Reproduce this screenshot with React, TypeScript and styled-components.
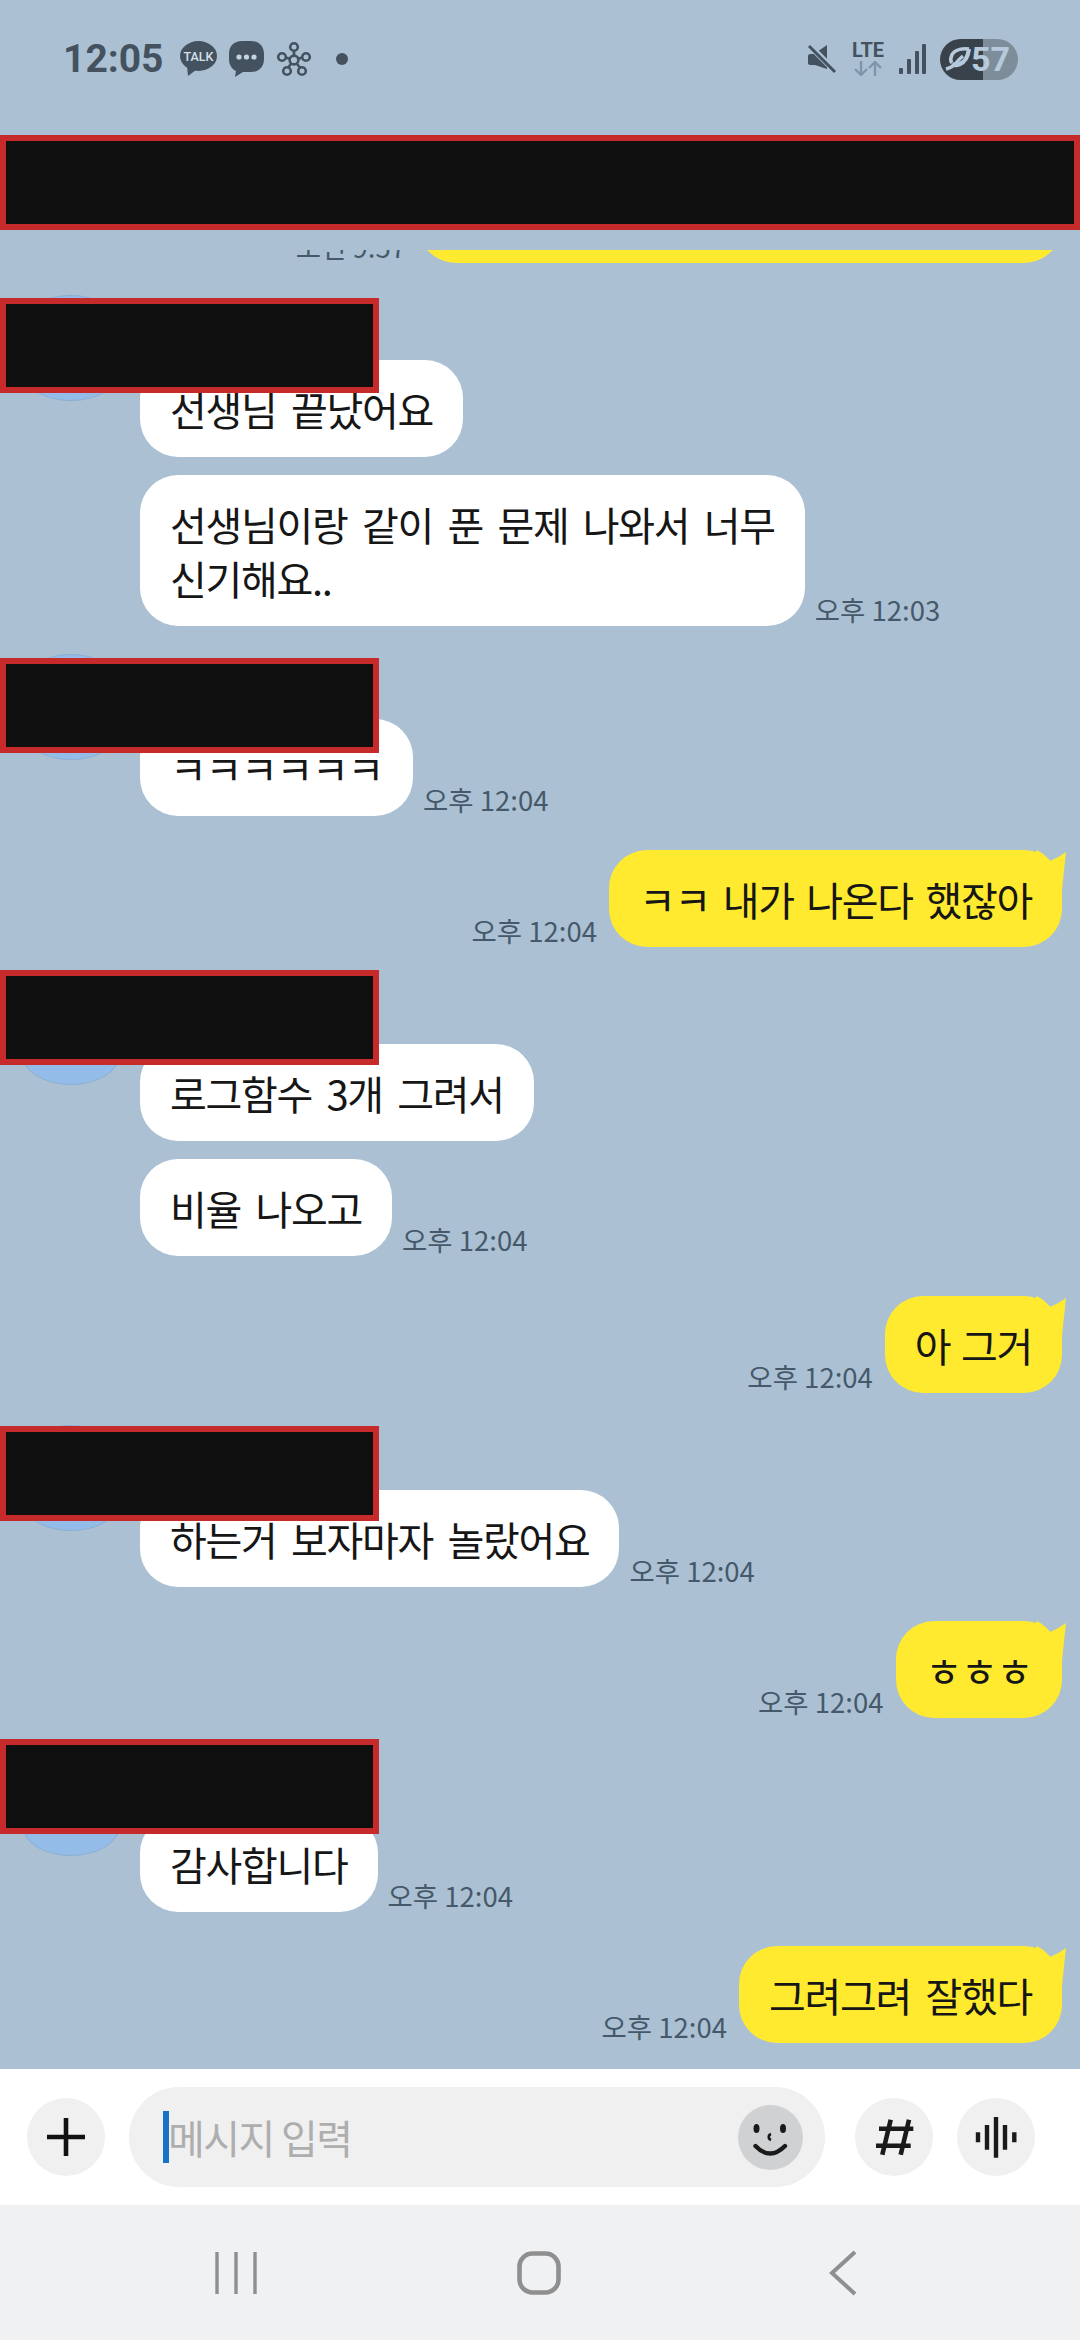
import React from 'react';
import styled, { createGlobalStyle } from 'styled-components';

const GlobalStyle = createGlobalStyle`
    html, body {
        margin: 0;
        padding: 0;
        background: #abc1d3;
    }
`;

const INK = '#44525f';

const TalkIcon = () => (
    <svg width="37" height="36" viewBox="0 0 37 36">
        <ellipse cx="18.5" cy="15" rx="18.5" ry="15" fill={INK} />
        <path d="M7 25 L8 35 L16 29 Z" fill={INK} />
        <text x="18.5" y="20" textAnchor="middle" fontFamily="Roboto, sans-serif" fontSize="12.5" fontWeight="500" fill="#d5e0ea">
            TALK
        </text>
    </svg>
);

const ChatDotsIcon = () => (
    <svg width="35" height="36" viewBox="0 0 35 36">
        <path d="M13 0 H22 C30 0 35 5 35 13 V18 C35 26 30 31 22 31 H14 L6 36 L7 30 C3 28 0 24 0 18 V13 C0 5 5 0 13 0 Z" fill={INK} />
        <circle cx="10" cy="16" r="2.6" fill="#c5d4e1" />
        <circle cx="17.5" cy="16" r="2.6" fill="#c5d4e1" />
        <circle cx="25" cy="16" r="2.6" fill="#c5d4e1" />
    </svg>
);

const HubIcon = () => (
    <svg width="36" height="36" viewBox="0 0 36 36" fill="none" stroke={INK} strokeWidth="2.6">
        <path d="M18 19 L18 10 M18 19 L8 16 M18 19 L28 16 M18 19 L11 28 M18 19 L25 28" />
        <circle cx="18" cy="19" r="4.4" fill="#abc1d3" />
        <circle cx="18" cy="6" r="3.8" fill="#abc1d3" />
        <circle cx="6" cy="16" r="3.8" fill="#abc1d3" />
        <circle cx="30" cy="16" r="3.8" fill="#abc1d3" />
        <circle cx="11" cy="30" r="3.8" fill="#abc1d3" />
        <circle cx="26" cy="30" r="3.8" fill="#abc1d3" />
    </svg>
);

const MuteIcon = () => (
    <svg width="30" height="30" viewBox="0 0 30 30">
        <path d="M1 12 C1 11 2 10 3 10 H7 L20 1 V25 L8 21 H3 C2 21 1 20 1 19 Z" fill={INK} />
        <path d="M1 0 L29 28" stroke="#abc1d3" strokeWidth="6" />
        <path d="M2 2 L28 28" stroke={INK} strokeWidth="3" />
    </svg>
);

const ArrowsIcon = () => (
    <svg width="34" height="15" viewBox="0 0 34 15" fill="none" stroke="#7e96aa" strokeWidth="2.4">
        <path d="M10 0 V13 M4 8 L10 14 L16 8" />
        <path d="M24 15 V2 M18 7 L24 1 L30 7" />
    </svg>
);

const SignalIcon = () => (
    <svg width="27" height="30" viewBox="0 0 27 30" fill={INK}>
        <rect x="0" y="24" width="4" height="6" rx="1" />
        <rect x="8" y="15" width="4" height="15" rx="1" />
        <rect x="16" y="7" width="4" height="23" rx="1" />
        <rect x="23" y="0" width="4" height="30" rx="1" />
    </svg>
);

const LeafIcon = () => (
    <svg width="26" height="24" viewBox="0 0 26 24" fill="none" stroke="#b7cadb">
        <path d="M24 2 C14 1 7 4 6 11 C5.5 13 6 15 7 16" strokeWidth="3.6" />
        <path d="M24 2 C23 9 20 15 15 17 C12 18.5 9 18.5 7 17" strokeWidth="4.2" />
        <path d="M1 22 C5 21 9 19 12 15 C13.5 13 15.5 11 18 9" strokeWidth="3.4" />
    </svg>
);

const PlusIcon = () => (
    <svg width="78" height="78" viewBox="0 0 78 78" stroke="#111" strokeWidth="4.6">
        <path d="M39 20 V58 M20 39 H58" />
    </svg>
);

const SmileIcon = () => (
    <svg width="65" height="65" viewBox="0 0 65 65" fill="#1a1a1a">
        <ellipse cx="18.5" cy="23.5" rx="3" ry="4.5" />
        <ellipse cx="45" cy="23.5" rx="3" ry="4.5" />
        <path d="M33 29 C30 30 30 34 33 35" fill="none" stroke="#1a1a1a" strokeWidth="2.6" />
        <path d="M17.5 41 Q32 56 47 41" fill="none" stroke="#1a1a1a" strokeWidth="4.4" strokeLinecap="round" />
    </svg>
);

const HashIcon = () => (
    <svg width="78" height="78" viewBox="0 0 78 78" stroke="#1a1a1a" strokeWidth="4.6">
        <path d="M35.7 21.7 L27.3 56.7 M54 21.7 L45.7 56.7 M24 30.7 H58.3 M21 47.7 H55.7" />
    </svg>
);

const VoiceIcon = () => (
    <svg width="78" height="78" viewBox="0 0 78 78" stroke="#1a1a1a" strokeWidth="4.4">
        <path d="M21 34.3 V44.3 M30 27 V51.7 M39 19 V59.7 M48 27 V51.7 M57.3 34.3 V44.3" />
    </svg>
);

const RecentsIcon = () => (
    <svg width="42" height="44" viewBox="0 0 42 44" stroke="#8f8f8f" strokeWidth="3.4">
        <path d="M2 1 V43 M21 1 V43 M40 1 V43" />
    </svg>
);

const HomeIcon = () => (
    <svg width="44" height="44" viewBox="0 0 44 44" fill="none" stroke="#8f8f8f" strokeWidth="4.6">
        <rect x="2.5" y="2.5" width="39" height="39" rx="13" />
    </svg>
);

const BackIcon = () => (
    <BackShape width="28" height="46" viewBox="0 0 28 46" fill="none" stroke="#8f8f8f" strokeWidth="4">
        <path d="M26 2 L3 23 L26 44" />
    </BackShape>
);

const BubbleTail = () => (
    <TailShape width="30" height="40" viewBox="0 0 30 40">
        <path d="M0 0 Q8 3 14 11 Q22 8 30 2 Q28 20 26 40 L0 40 Z" fill="#ffea30" />
    </TailShape>
);

export default function App() {
    return (
        <Screen>
            <GlobalStyle />
            <StatusBar>
                <StatusLeft>
                    <Clock>12:05</Clock>
                    <TalkIcon />
                    <ChatDotsIcon />
                    <HubIcon />
                    <NoticeDot />
                </StatusLeft>
                <StatusRight>
                    <MuteIcon />
                    <LteStack>
                        <LteLabel>LTE</LteLabel>
                        <ArrowsIcon />
                    </LteStack>
                    <SignalIcon />
                    <Battery>
                        <LeafIcon />
                        <BatteryLevel>57</BatteryLevel>
                    </Battery>
                </StatusRight>
            </StatusBar>

            <ChatHeader>
                <HeaderRedaction />
            </ChatHeader>

            <Messages>
                <SentRow $gap={0}>
                    <TimeStamp>오전 9:57</TimeStamp>
                    <Bubble $mine $minWidth={644}>
                        <BubbleTail />
                        &nbsp;
                    </Bubble>
                </SentRow>

                <ReceivedGroup $gap={32}>
                    <Avatar />
                    <Redaction $top={3} />
                    <Stack>
                        <ReceivedRow>
                            <Bubble>선생님 끝났어요</Bubble>
                        </ReceivedRow>
                        <ReceivedRow>
                            <Bubble>
                                선생님이랑 같이 푼 문제 나와서 너무
                                <br />
                                신기해요..
                            </Bubble>
                            <TimeStamp>오후 12:03</TimeStamp>
                        </ReceivedRow>
                    </Stack>
                </ReceivedGroup>

                <ReceivedGroup $gap={28}>
                    <Avatar />
                    <Redaction $top={4} />
                    <Stack>
                        <ReceivedRow>
                            <Bubble>ㅋㅋㅋㅋㅋㅋ</Bubble>
                            <TimeStamp>오후 12:04</TimeStamp>
                        </ReceivedRow>
                    </Stack>
                </ReceivedGroup>

                <SentRow $gap={34}>
                    <TimeStamp>오후 12:04</TimeStamp>
                    <Bubble $mine $wordSpacing={5}>
                        <BubbleTail />
                        ㅋㅋ 내가 나온다 했잖아
                    </Bubble>
                </SentRow>

                <ReceivedGroup $gap={32}>
                    <Avatar />
                    <Redaction $top={-9} />
                    <Stack>
                        <ReceivedRow>
                            <Bubble>로그함수 3개 그려서</Bubble>
                        </ReceivedRow>
                        <ReceivedRow>
                            <Bubble>비율 나오고</Bubble>
                            <TimeStamp>오후 12:04</TimeStamp>
                        </ReceivedRow>
                    </Stack>
                </ReceivedGroup>

                <SentRow $gap={40}>
                    <TimeStamp>오후 12:04</TimeStamp>
                    <Bubble $mine $wordSpacing={3}>
                        <BubbleTail />
                        아 그거
                    </Bubble>
                </SentRow>

                <ReceivedGroup $gap={32}>
                    <Avatar />
                    <Redaction $top={1} />
                    <Stack>
                        <ReceivedRow>
                            <Bubble>하는거 보자마자 놀랐어요</Bubble>
                            <TimeStamp>오후 12:04</TimeStamp>
                        </ReceivedRow>
                    </Stack>
                </ReceivedGroup>

                <SentRow $gap={34}>
                    <TimeStamp>오후 12:04</TimeStamp>
                    <Bubble $mine>
                        <BubbleTail />
                        ㅎㅎㅎ
                    </Bubble>
                </SentRow>

                <ReceivedGroup $gap={32}>
                    <Avatar />
                    <Redaction $top={-11} />
                    <Stack>
                        <ReceivedRow>
                            <Bubble>감사합니다</Bubble>
                            <TimeStamp>오후 12:04</TimeStamp>
                        </ReceivedRow>
                    </Stack>
                </ReceivedGroup>

                <SentRow $gap={34}>
                    <TimeStamp>오후 12:04</TimeStamp>
                    <Bubble $mine>
                        <BubbleTail />
                        그려그려 잘했다
                    </Bubble>
                </SentRow>
            </Messages>

            <Composer>
                <RoundButton>
                    <PlusIcon />
                </RoundButton>
                <InputPill>
                    <Caret />
                    <Placeholder>메시지 입력</Placeholder>
                    <EmojiButton>
                        <SmileIcon />
                    </EmojiButton>
                </InputPill>
                <RoundButton>
                    <HashIcon />
                </RoundButton>
                <RoundButton>
                    <VoiceIcon />
                </RoundButton>
            </Composer>

            <NavBar>
                <RecentsIcon />
                <HomeIcon />
                <BackIcon />
            </NavBar>
        </Screen>
    );
}

const Screen = styled.div`
    width: 1080px;
    height: 2340px;
    display: flex;
    flex-direction: column;
    overflow: hidden;
    background: #abc1d3;
    font-family: 'Noto Sans CJK KR', 'Noto Sans', sans-serif;
`;

const StatusBar = styled.div`
    height: 118px;
    flex: none;
    display: flex;
    align-items: center;
    justify-content: space-between;
    padding: 0 62px 0 63px;
`;

const StatusLeft = styled.div`
    display: flex;
    align-items: center;
    gap: 12px;
`;

const StatusRight = styled.div`
    display: flex;
    align-items: center;
    gap: 14px;
`;

const Clock = styled.div`
    font-family: Roboto, sans-serif;
    font-size: 39px;
    font-weight: 700;
    color: ${INK};
    margin-right: 4px;
`;

const NoticeDot = styled.div`
    width: 12px;
    height: 12px;
    margin-left: 12px;
    border-radius: 50%;
    background: ${INK};
`;

const LteStack = styled.div`
    display: flex;
    flex-direction: column;
    align-items: center;
    gap: 3px;
`;

const LteLabel = styled.div`
    font-family: Roboto, sans-serif;
    font-size: 20px;
    line-height: 16px;
    font-weight: 700;
    color: ${INK};
`;

const Battery = styled.div`
    width: 78px;
    height: 41px;
    box-sizing: border-box;
    padding-left: 5px;
    display: flex;
    align-items: center;
    border-radius: 21px;
    background: linear-gradient(90deg, #39424b 55%, #7e8d9a 55%);
`;

const BatteryLevel = styled.div`
    font-family: Roboto, sans-serif;
    font-size: 34px;
    font-weight: 700;
    color: #b7cadb;
`;

const ChatHeader = styled.div`
    flex: none;
    padding: 17px 0 20px;
`;

const HeaderRedaction = styled.div`
    height: 95px;
    box-sizing: border-box;
    border: 6px solid #c62a2a;
    background: #0f0f0f;
`;

const Messages = styled.div`
    flex: 1;
    min-height: 0;
    overflow: hidden;
    display: flex;
    flex-direction: column;
    justify-content: flex-end;
    padding-bottom: 26px;
`;

const SentRow = styled.div<{ $gap: number }>`
    flex: none;
    display: flex;
    justify-content: flex-end;
    align-items: flex-end;
    gap: 12px;
    margin-top: ${(p) => p.$gap}px;
    padding-right: 18px;
`;

const ReceivedGroup = styled.div<{ $gap: number }>`
    flex: none;
    position: relative;
    display: flex;
    align-items: flex-start;
    gap: 21px;
    margin-top: ${(p) => p.$gap}px;
    padding-left: 23px;
`;

const Avatar = styled.div`
    width: 96px;
    height: 106px;
    flex: none;
    box-sizing: border-box;
    border: 1px solid #8aaed2;
    border-radius: 50% / 27%;
    background: #93bce8;
`;

const Redaction = styled.div<{ $top: number }>`
    position: absolute;
    left: 0;
    top: ${(p) => p.$top}px;
    z-index: 2;
    width: 379px;
    height: 95px;
    box-sizing: border-box;
    border: 6px solid #c62a2a;
    background: #0f0f0f;
`;

const Stack = styled.div`
    display: flex;
    flex-direction: column;
    align-items: flex-start;
    gap: 18px;
    padding-top: 65px;
`;

const ReceivedRow = styled.div`
    display: flex;
    align-items: flex-end;
    gap: 10px;
`;

const Bubble = styled.div<{ $mine?: boolean; $minWidth?: number; $wordSpacing?: number }>`
    position: relative;
    box-sizing: border-box;
    padding: 21.5px 30px;
    min-width: ${(p) => p.$minWidth ?? 0}px;
    border-radius: 38px;
    background: ${(p) => (p.$mine ? '#ffea30' : '#ffffff')};
    color: #161616;
    font-size: 40px;
    line-height: 54px;
    letter-spacing: -1.3px;
    word-spacing: ${(p) => p.$wordSpacing ?? 6.8}px;
    white-space: nowrap;
`;

const TailShape = styled.svg`
    position: absolute;
    right: -4px;
    top: 0;
`;

const TimeStamp = styled.div`
    font-size: 27.5px;
    line-height: 34px;
    color: #46596b;
    white-space: nowrap;
`;

const Composer = styled.div`
    height: 136px;
    flex: none;
    box-sizing: border-box;
    display: flex;
    align-items: center;
    gap: 24px;
    padding: 0 45px 0 27px;
    background: #ffffff;
`;

const RoundButton = styled.div`
    width: 78px;
    height: 78px;
    flex: none;
    border-radius: 50%;
    background: #f0f0f1;
    display: flex;
`;

const InputPill = styled.div`
    flex: 1;
    height: 100px;
    margin-right: 6px;
    padding: 0 22px 0 34px;
    display: flex;
    align-items: center;
    border-radius: 50px;
    background: #f0f0f1;
`;

const Caret = styled.div`
    width: 6px;
    height: 52px;
    margin-right: -1px;
    background: #1873c8;
`;

const Placeholder = styled.div`
    font-size: 40px;
    letter-spacing: -1.6px;
    color: #aeaeae;
`;

const EmojiButton = styled.div`
    width: 65px;
    height: 65px;
    margin-left: auto;
    display: flex;
    border-radius: 50%;
    background: #d0d1d2;
`;

const NavBar = styled.div`
    height: 135px;
    flex: none;
    box-sizing: border-box;
    display: flex;
    align-items: center;
    gap: 260px;
    padding-left: 215px;
    background: #f0f1f3;
`;

const BackShape = styled.svg`
    margin-left: 8px;
`;
